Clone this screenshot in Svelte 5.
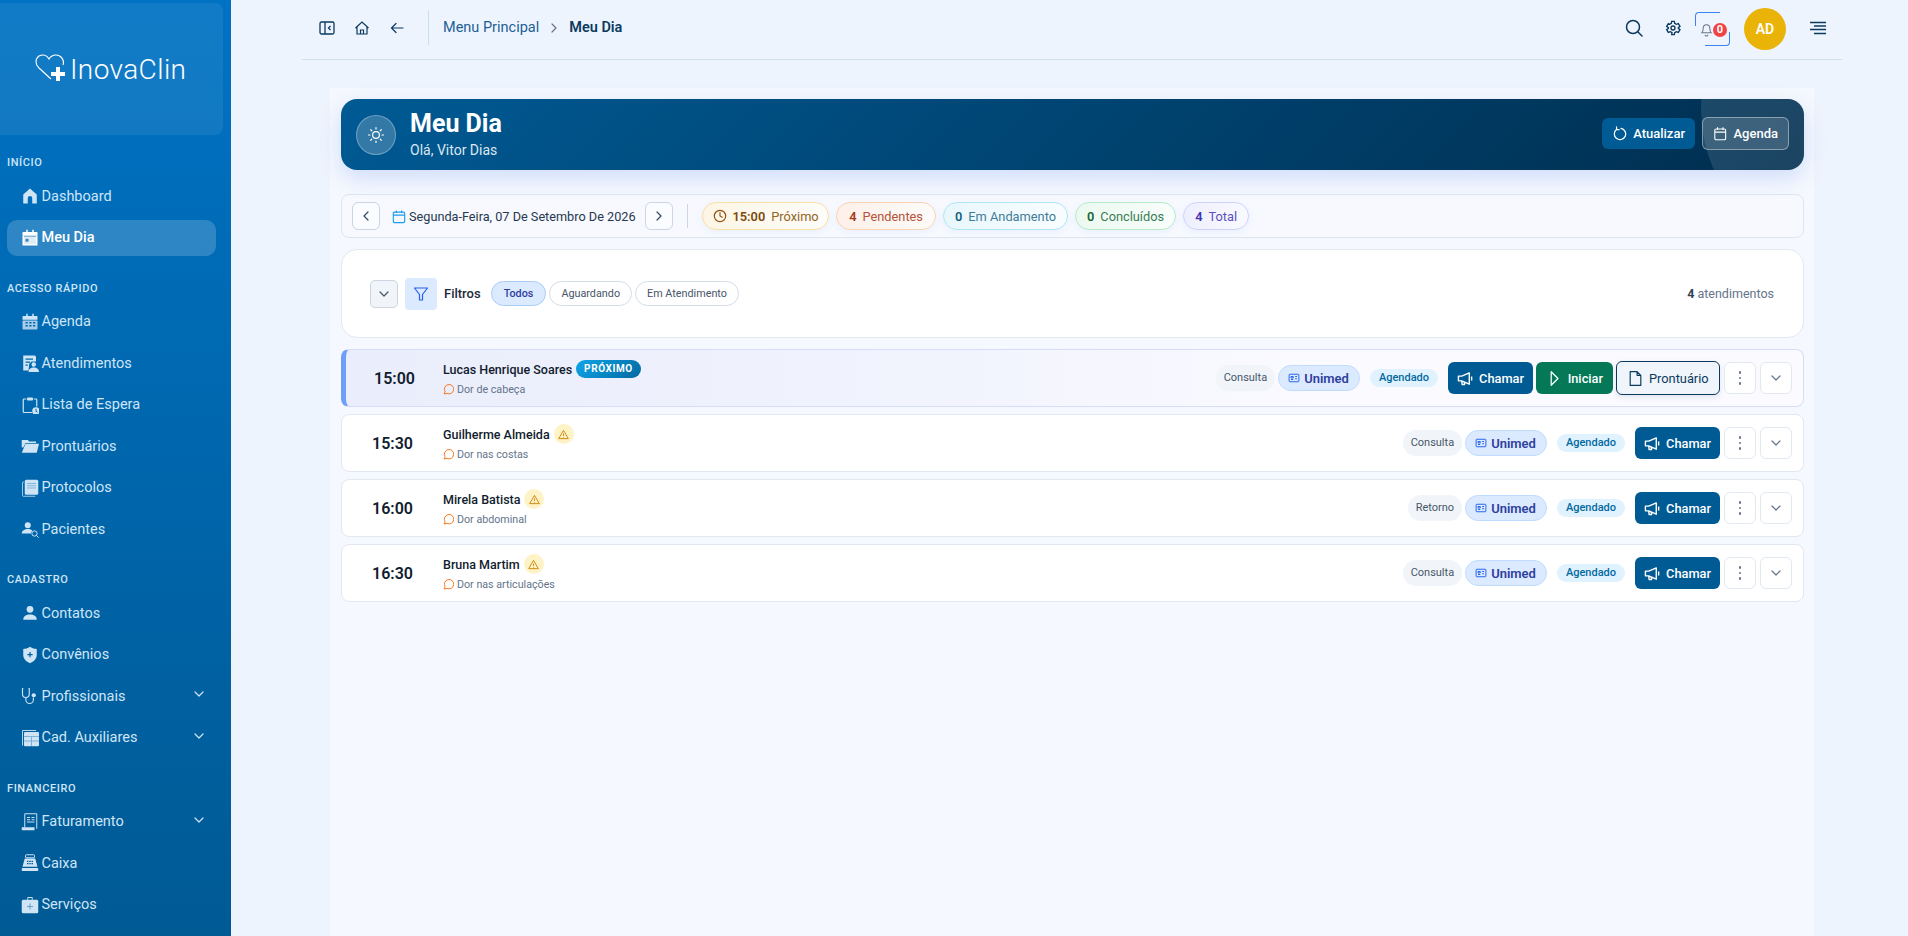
<script>
  // stroke/fill bodies of the icons, 24x24 unless noted
  const ic = {
    house: '<path fill="currentColor" d="M12 2 3 10v12h6v-7a3 3 0 0 1 6 0v7h6V10z"/>',
    calToday: '<path fill="currentColor" d="M7 1h2v3H7zM15 1h2v3h-2zM3 4h18a1 1 0 0 1 1 1v4H2V5a1 1 0 0 1 1-1z"/><path fill="none" stroke="currentColor" stroke-width="2" d="M3 9v12h18V9"/><rect fill="currentColor" opacity=".85" x="4" y="10" width="16" height="10"/><rect fill="#3d86c4" x="6" y="13" width="4" height="4"/>',
    calGrid: '<path fill="currentColor" d="M7 1h2v3H7zM15 1h2v3h-2zM3 4h18a1 1 0 0 1 1 1v4H2V5a1 1 0 0 1 1-1z"/><rect fill="currentColor" opacity=".8" x="2" y="10" width="20" height="12" rx="1"/><path fill="#0069b0" d="M6 12h3v2H6zM11 12h3v2h-3zM16 12h3v2h-3zM6 16h3v2H6zM11 16h3v2h-3zM16 16h3v2h-3z"/>',
    docUser: '<path fill="currentColor" d="M3 2h15a2 2 0 0 1 2 2v6h-6l-3 3-1 9H3z"/><path fill="#0069b0" d="M6 6h10v1.5H6zM6 10h6v1.500H6zM6 14h3v1.500H6z"/><circle fill="currentColor" cx="17" cy="14" r="3"/><path fill="currentColor" d="M10 24c0-4 3-6 7-6s7 2 7 6z"/>',
    clip: '<path fill="none" stroke="currentColor" stroke-width="1.600" d="M7 4H4a1 1 0 0 0-1 1v16a1 1 0 0 0 1 1h11M17 4h3a1 1 0 0 1 1 1v9"/><rect fill="currentColor" x="8" y="2" width="8" height="4" rx="1"/><circle fill="currentColor" cx="20" cy="20" r="5"/><path stroke="#0069b0" stroke-width="1.300" fill="none" d="M20 17v3.500l2 1"/>',
    folder: '<path fill="currentColor" d="M1 4h8l2 2h9v2H6L3 14H1z"/><path fill="currentColor" d="M6 9h18l-3 12H1z"/>',
    book: '<path fill="none" stroke="currentColor" stroke-width="1.300" opacity=".8" d="M4 4H3a1 1 0 0 0-1 1v17a1 1 0 0 0 1 1h16"/><rect fill="currentColor" x="5" y="1" width="18" height="20" rx="2"/><path stroke="#0069b0" stroke-width="1" opacity=".5" d="M8 6h12M8 9h12M8 12h12"/>',
    userSearch: '<circle fill="currentColor" cx="9" cy="7" r="4"/><path fill="currentColor" d="M1 18c0-4 4-6 8-6 2 0 4 .5 6 2l-2 4z"/><circle fill="none" stroke="currentColor" stroke-width="1.300" cx="18" cy="18" r="3.500"/><path stroke="currentColor" stroke-width="1.300" d="m20.500 20.500 3 3"/>',
    user: '<circle fill="currentColor" cx="12" cy="7" r="4.500"/><path fill="currentColor" d="M3 21c0-5 4-7 9-7s9 2 9 7z"/>',
    shield: '<path fill="currentColor" d="M12 1c3 2 6 3 9 3v8c0 5-4 9-9 11-5-2-9-6-9-11V4c3 0 6-1 9-3z"/><path stroke="#0060a0" stroke-width="1.600" d="M12 8v7M8.500 11.500h7"/>',
    steth: '<path fill="none" stroke="currentColor" stroke-width="1.500" d="M3 2H2v7c0 3 2 5 4.500 5S11 12 11 9V2h-1M6.500 14v3a5 5 0 0 0 10 0v-3"/><circle fill="currentColor" cx="17" cy="11" r="2.800"/>',
    table: '<path fill="none" stroke="currentColor" stroke-width="1.200" d="M2 22V2h18"/><rect fill="currentColor" x="4" y="4" width="20" height="19" rx="1.500"/><path stroke="#0060a0" opacity=".5" stroke-width="1" d="M4 10h20M14 10v13M4 16h20"/>',
    ledger: '<path fill="none" stroke="currentColor" stroke-width="1.300" d="M5 19V1h16v20"/><path stroke="currentColor" stroke-width="1.300" d="M8 6h4M14 6h4M8 9h4M14 9h4M8 12h10"/><path fill="currentColor" d="M1 19h17v4H2a1 1 0 0 1-1-1z"/>',
    register: '<rect fill="none" stroke="currentColor" stroke-width="1.300" x="6" y="1" width="12" height="4" rx="1"/><path fill="currentColor" d="M5 6h14l3 11H2z"/><path fill="#005c99" d="M8 9h2v1.500H8zM11 9h2v1.500h-2zM14 9h2v1.500h-2zM8 12h2v1.500H8zM11 12h2v1.500h-2zM14 12h2v1.500h-2z"/><rect fill="currentColor" x="1" y="18.500" width="22" height="4" rx="1"/>',
    kit: '<path fill="none" stroke="currentColor" stroke-width="1.300" d="M9 5V2h6v3"/><rect fill="currentColor" x="1" y="5" width="22" height="18" rx="2"/><path stroke="#005c99" stroke-width="1.100" opacity=".6" d="M12 10v8M8 14h8"/>'
  };

  const sections = [
    { title: 'INÍCIO', items: [
      { label: 'Dashboard', icon: 'house' },
      { label: 'Meu Dia', icon: 'calToday', active: true }
    ]},
    { title: 'ACESSO RÁPIDO', items: [
      { label: 'Agenda', icon: 'calGrid' },
      { label: 'Atendimentos', icon: 'docUser' },
      { label: 'Lista de Espera', icon: 'clip' },
      { label: 'Prontuários', icon: 'folder' },
      { label: 'Protocolos', icon: 'book' },
      { label: 'Pacientes', icon: 'userSearch' }
    ]},
    { title: 'CADASTRO', items: [
      { label: 'Contatos', icon: 'user' },
      { label: 'Convênios', icon: 'shield' },
      { label: 'Profissionais', icon: 'steth', more: true },
      { label: 'Cad. Auxiliares', icon: 'table', more: true }
    ]},
    { title: 'FINANCEIRO', items: [
      { label: 'Faturamento', icon: 'ledger', more: true },
      { label: 'Caixa', icon: 'register' },
      { label: 'Serviços', icon: 'kit' }
    ]}
  ];

  const stats = [
    { n: '4', label: 'Pendentes', cls: 'orange' },
    { n: '0', label: 'Em Andamento', cls: 'cyan' },
    { n: '0', label: 'Concluídos', cls: 'green' },
    { n: '4', label: 'Total', cls: 'violet' }
  ];

  const rows = [
    { time: '15:00', name: 'Lucas Henrique Soares', note: 'Dor de cabeça', kind: 'Consulta', next: true },
    { time: '15:30', name: 'Guilherme Almeida', note: 'Dor nas costas', kind: 'Consulta' },
    { time: '16:00', name: 'Mirela Batista', note: 'Dor abdominal', kind: 'Retorno' },
    { time: '16:30', name: 'Bruna Martim', note: 'Dor nas articulações', kind: 'Consulta' }
  ];
</script>

{#snippet chev(d)}
  <svg viewBox="0 0 24 24" width="16" height="16" fill="none" stroke="currentColor" stroke-width="1.800" stroke-linecap="round" stroke-linejoin="round"><path d={d}/></svg>
{/snippet}

<div class="app">
  <aside class="side">
    <div class="brand">
      <svg class="brand-mark" viewBox="0 0 32 30" width="32" height="30">
        <path fill="none" stroke="#fff" stroke-width="1.100" d="M16 26 4 15C0 11 0 6 4 3c4-2 8-1 10 3 3-5 9-5 12-2 2 2 3 5 2 8"/>
        <path fill="#fff" d="M21 14h4v5h5v4h-5v5h-4v-5h-5v-4h5z"/>
      </svg>
      <span>InovaClin</span>
    </div>
    {#each sections as s}
      <div class="sec-title">{s.title}</div>
      <nav class="sec">
        {#each s.items as it}
          <div class="nav-item" class:active={it.active}>
            <svg class="nav-icon" viewBox="0 0 24 24" width="18" height="18">{@html ic[it.icon]}</svg>
            <span class="nav-label">{it.label}</span>
            {#if it.more}
              <span class="nav-more">{@render chev('m6 9 6 6 6-6')}</span>
            {/if}
          </div>
        {/each}
      </nav>
    {/each}
  </aside>

  <main class="main">
    <header class="top">
      <div class="top-left">
        <svg viewBox="0 0 16 16" width="16" height="16" fill="none" stroke="#0b3a5e" stroke-width="1.300"><rect x="1" y="2" width="14" height="12" rx="1.500"/><path d="M6 2v12M11.500 6 9.500 8l2 2"/></svg>
        <svg viewBox="0 0 16 16" width="16" height="16" fill="none" stroke="#0b3a5e" stroke-width="1.200"><path d="M1.500 8 8 2l6.500 6M3 7v7h10V7M6.500 14v-4h3v4"/></svg>
        <svg viewBox="0 0 16 16" width="16" height="16" fill="none" stroke="#0b3a5e" stroke-width="1.200" stroke-linecap="round"><path d="M14 8H3M7 3.500 2.500 8 7 12.500"/></svg>
      </div>
      <div class="crumbs">
        <span class="crumb-link">Menu Principal</span>
        <span class="crumb-sep">{@render chev('m9 6 6 6-6 6')}</span>
        <span class="crumb-now">Meu Dia</span>
      </div>
      <div class="top-right">
        <svg class="up" viewBox="0 0 18 18" width="18" height="18" fill="none" stroke="#0b3a5e" stroke-width="1.500" stroke-linecap="round"><circle cx="8" cy="8" r="6.500"/><path d="m13 13 4 4"/></svg>
        <svg class="gear up" viewBox="0 0 24 24" width="16" height="16" fill="none" stroke="#0b3a5e" stroke-width="2"><circle cx="12" cy="12" r="3"/><path d="m10 2-.5 3-2.500 1.500L5 5.500l-2.500 4L5 11.500v1L2.500 14.500l2.500 4 3-1L10.500 19l-.5 3h4l.5-3 2.500-1.500 3 1 2.500-4-2.500-2v-1l2.500-2-2.500-4-3 1L14.500 5 14 2z"/></svg>
        <div class="bell">
          <span class="ring-a"></span><span class="ring-b"></span>
          <svg viewBox="0 0 16 16" width="15" height="16" fill="none" stroke="#66758a" stroke-width="1.100"><path d="M3 12c1-1 1.500-2 1.500-5a3.500 3.500 0 0 1 7 0c0 3 .5 4 1.500 5zM6.500 14a1.500 1.500 0 0 0 3 0"/></svg>
          <span class="bell-count">0</span>
        </div>
        <div class="avatar">AD</div>
        <svg class="up" viewBox="0 0 18 14" width="18" height="14" stroke="#0b3a5e" stroke-width="1.400"><path d="M1 1.500h16M5 5h12M1 8.500h16M5 12.500h12"/></svg>
      </div>
    </header>

    <div class="panel">
      <section class="hero">
        <div class="hero-sun">
          <svg viewBox="0 0 24 24" width="18" height="18" fill="none" stroke="#fff" stroke-width="1.600" stroke-linecap="round"><circle cx="12" cy="12" r="4.500"/><path d="M12 2v2M12 20v2M2 12h2M20 12h2M5 5l1.400 1.400M17.600 17.600 19 19M5 19l1.400-1.400M17.600 6.400 19 5"/></svg>
        </div>
        <div class="hero-text">
          <h1>Meu Dia</h1>
          <p>Olá, Vitor Dias</p>
        </div>
        <div class="hero-btns">
          <button class="btn-refresh">
            <svg viewBox="0 0 16 16" width="17" height="17" fill="none" stroke="#fff" stroke-width="1.300" stroke-linecap="round" stroke-linejoin="round"><path d="M5 3.600A6 6 0 1 0 9.500 2.600M4.800 1v2.800h2.800"/></svg>
            Atualizar
          </button>
          <button class="btn-agenda">
            <svg viewBox="0 0 16 16" width="17" height="17" fill="none" stroke="#fff" stroke-width="1.200"><rect x="2" y="3" width="12" height="12" rx="1.500"/><path d="M2 6.500h12M5 1v3M11 1v3"/></svg>
            Agenda
          </button>
        </div>
      </section>

      <section class="datebar">
        <button class="square">{@render chev('m15 6-6 6 6 6')}</button>
        <svg class="date-cal" viewBox="0 0 16 16" width="14" height="15" fill="none" stroke="#1d9bf0" stroke-width="1.300"><rect x="1.500" y="3" width="13" height="12" rx="1.500"/><path d="M1.500 6.500h13M5 1v3M11 1v3"/></svg>
        <span class="date-text">Segunda-Feira, 07 De Setembro De 2026</span>
        <button class="square">{@render chev('m9 6 6 6-6 6')}</button>
        <span class="vr"></span>
        <div class="stats">
          <div class="stat amber">
            <svg viewBox="0 0 16 16" width="14" height="14" fill="none" stroke="#92500f" stroke-width="1.300" stroke-linecap="round"><circle cx="8" cy="8" r="6.500"/><path d="M8 4v4l2.500 1.500"/></svg>
            <b>15:00</b> <span>Próximo</span>
          </div>
          {#each stats as st}
            <div class="stat {st.cls}"><b>{st.n}</b> <span>{st.label}</span></div>
          {/each}
        </div>
      </section>

      <section class="filters">
        <button class="collapse">{@render chev('m6 9 6 6 6-6')}</button>
        <span class="funnel">
          <svg viewBox="0 0 16 16" width="16" height="16" fill="none" stroke="#2563eb" stroke-width="1.200" stroke-linejoin="round"><path d="M1.500 2h13L9.500 8.500V14h-3V8.500z"/></svg>
        </span>
        <strong class="f-label">Filtros</strong>
        <div class="chips">
          <span class="chip on">Todos</span>
          <span class="chip">Aguardando</span>
          <span class="chip">Em Atendimento</span>
        </div>
        <span class="f-count"><b>4</b> atendimentos</span>
      </section>

      <section class="list">
        {#each rows as r}
          <article class="row" class:next={r.next}>
            <div class="time">{r.time}</div>
            <div class="who">
              <div class="name">
                <span>{r.name}</span>
                {#if r.next}
                  <span class="tag-next">PRÓXIMO</span>
                {:else}
                  <span class="warn">
                    <svg viewBox="0 0 16 16" width="11" height="11" fill="none" stroke="#d1880b" stroke-width="1.400" stroke-linejoin="round"><path d="M8 2 15 14H1zM8 6.500v3.500M8 11.500v1"/></svg>
                  </span>
                {/if}
              </div>
              <div class="note">
                <svg viewBox="0 0 16 16" width="11" height="11" fill="none" stroke="#f97316" stroke-width="1.400" stroke-linejoin="round"><path d="M1.500 14.500 3 11a6.800 6.800 0 1 1 3 2.700z"/></svg>
                {r.note}
              </div>
            </div>
            <div class="acts">
              <span class="kind">{r.kind}</span>
              <span class="plan">
                <svg viewBox="0 0 16 16" width="12" height="12" fill="none" stroke="#2563eb" stroke-width="1.300"><rect x="1.500" y="3" width="13" height="10" rx="1"/><path d="M4 10h3M9.500 6h2.500M9.500 9h2.500M4 6h3v2H4z"/></svg>
                Unimed
              </span>
              <span class="status">Agendado</span>
              <button class="act call">
                <svg viewBox="0 0 18 18" width="17" height="17" fill="none" stroke="#fff" stroke-width="1.500" stroke-linejoin="round"><path d="M1.500 6.500v5h3.500l8 3.500V3L5 6.500zM15.500 7v4M5 11.500l.5 4h2.500l-.5-3"/></svg>
                Chamar
              </button>
              {#if r.next}
                <button class="act start">
                  <svg viewBox="0 0 16 16" width="17" height="17" fill="none" stroke="#fff" stroke-width="1.200" stroke-linejoin="round"><path d="M5 1.500v13L11.500 8z"/></svg>
                  Iniciar
                </button>
                <button class="act chart">
                  <svg viewBox="0 0 16 16" width="17" height="17" fill="none" stroke="#0b3a5e" stroke-width="1.100" stroke-linejoin="round"><path d="M3 1.500h6.500L13 5v9.500H3zM9.500 1.500V5H13"/></svg>
                  Prontuário
                </button>
              {/if}
              <button class="mini dots"><i></i><i></i><i></i></button>
              <button class="mini">{@render chev('m6 9 6 6 6-6')}</button>
            </div>
          </article>
        {/each}
      </section>
    </div>
  </main>
</div>

<style>
  :global(body) {
    margin: 0;
    overflow: hidden;
    background: #eef4fd;
    font-family: Roboto, "Noto Sans", sans-serif;
  }
  button {
    font-family: inherit;
    cursor: pointer;
  }
  .app {
    display: grid;
    grid-template-columns: 231px 1fr;
    height: 936px;
    overflow: hidden;
  }

  /* sidebar */
  .side {
    height: 936px;
    overflow: hidden;
    background: linear-gradient(180deg, #0072c4 0%, #005a94 100%);
    color: #cfe5f6;
  }
  .brand {
    height: 132px;
    margin: 3px 8px 0 0;
    border-radius: 0 8px 8px 0;
    background: rgba(255, 255, 255, 0.07);
    display: flex;
    align-items: center;
    padding: 0 0 0 35px;
    gap: 3px;
    color: #fff;
    font-size: 28px;
    font-weight: 300;
    letter-spacing: 0.4px;
  }
  .brand-mark {
    margin-top: -2px;
  }
  .sec-title {
    margin: 0 0 0 7px;
    height: 18px;
    line-height: 18px;
    font-size: 11px;
    font-weight: 500;
    letter-spacing: 0.6px;
  }
  .brand + .sec-title {
    margin-top: 19px;
  }
  .sec {
    display: flex;
    flex-direction: column;
    gap: 5.500px;
    margin: 6px 0 24px;
  }
  .nav-item {
    height: 36px;
    margin: 0 15px 0 7px;
    padding: 0 9px 0 14px;
    border-radius: 10px;
    display: flex;
    align-items: center;
    gap: 2.500px;
    font-size: 14.500px;
  }
  .nav-item.active {
    background: rgba(255, 255, 255, 0.18);
    color: #fff;
    font-weight: 500;
  }
  .nav-icon {
    flex: none;
  }
  .nav-label {
    flex: 1;
  }
  .nav-more {
    display: flex;
    height: 16px;
    margin-top: -4px;
  }

  /* top bar */
  .main {
    min-width: 0;
  }
  .top {
    height: 59px;
    margin: 0 66px 0 71px;
    border-bottom: 1px solid #cfe0ef;
    display: flex;
    align-items: center;
    box-sizing: content-box;
  }
  .top-left {
    display: flex;
    align-items: center;
    gap: 19px;
    padding: 0 23px 0 17px;
    height: 35px;
    border-right: 1px solid #c9dff0;
    margin-top: -4px;
  }
  .crumbs {
    display: flex;
    align-items: center;
    margin: -4px 0 0 14px;
    font-size: 14.500px;
    gap: 7px;
  }
  .crumb-link {
    color: #1d5f95;
  }
  .crumb-sep {
    display: flex;
    color: #667788;
  }
  .crumb-now {
    font-weight: 600;
    color: #0b3a5e;
  }
  .top-right {
    margin-left: auto;
    margin-right: 15px;
    display: flex;
    align-items: center;
    margin-top: -2px;
  }
  .up {
    margin-top: -2px;
  }
  .gear {
    margin-left: 22px;
  }
  .bell {
    position: relative;
    width: 35px;
    height: 34px;
    margin-left: 14px;
    display: flex;
    align-items: center;
    padding-left: 4px;
    box-sizing: border-box;
  }
  .ring-a,
  .ring-b {
    position: absolute;
    width: 24px;
    height: 13px;
    border: 0 solid #3b82f6;
  }
  .ring-a {
    left: 0;
    top: 0;
    border-width: 1px 0 0 1px;
    border-top-left-radius: 4px;
  }
  .ring-b {
    right: 0;
    bottom: 0;
    border-width: 0 1px 1px 0;
    border-bottom-right-radius: 4px;
  }
  .bell-count {
    position: absolute;
    left: 18px;
    top: 11px;
    width: 14px;
    height: 14px;
    border-radius: 50%;
    background: #ef4444;
    color: #fff;
    font-size: 11px;
    font-weight: 700;
    line-height: 14px;
    text-align: center;
  }
  .avatar {
    width: 42px;
    height: 42px;
    margin: 0 23px 0 14px;
    border-radius: 50%;
    background: #eab308;
    color: #fff;
    font-size: 14px;
    font-weight: 600;
    line-height: 42px;
    text-align: center;
  }

  /* content */
  .panel {
    margin: 28px 94px 0 99px;
    padding: 11px 10px 0 11px;
    height: 848px;
    box-sizing: border-box;
    background: #f5f8fe;
    display: flex;
    flex-direction: column;
  }
  .hero {
    position: relative;
    overflow: hidden;
    flex: none;
    height: 71px;
    border-radius: 16px;
    padding: 0 15px;
    display: flex;
    align-items: center;
    gap: 14px;
    color: #fff;
    background: linear-gradient(135deg, #005a94 0%, #002e4f 100%);
    box-shadow: 0 8px 22px rgba(37, 99, 235, 0.18);
  }
  .hero::after {
    content: "";
    position: absolute;
    left: 1360px;
    top: -140px;
    width: 300px;
    height: 300px;
    border-radius: 50%;
    background: rgba(255, 255, 255, 0.11);
    pointer-events: none;
  }
  .hero-sun {
    flex: none;
    width: 38px;
    height: 38px;
    border-radius: 50%;
    background: rgba(255, 255, 255, 0.2);
    border: 1px solid rgba(255, 255, 255, 0.3);
    display: flex;
    align-items: center;
    justify-content: center;
  }
  .hero-text {
    margin-top: -2px;
  }
  .hero-text h1 {
    margin: 0;
    font-size: 25px;
    line-height: 30px;
    font-weight: 700;
  }
  .hero-text p {
    margin: 3px 0 0;
    font-size: 14px;
    line-height: 17px;
    color: #dbe7f1;
  }
  .hero-btns {
    margin: -3px 0 0 auto;
    display: flex;
    align-items: center;
    gap: 7px;
    position: relative;
    z-index: 1;
  }
  .hero-btns button {
    display: flex;
    align-items: center;
    gap: 6px;
    color: #fff;
    font-size: 13px;
    font-weight: 500;
    border-radius: 6px;
    padding: 0 10px;
  }
  .btn-refresh {
    height: 31px;
    width: 93px;
    background: #005a94;
    border: 0;
  }
  .btn-agenda {
    height: 33px;
    width: 87px;
    background: rgba(255, 255, 255, 0.15);
    border: 1px solid rgba(255, 255, 255, 0.4);
  }

  .datebar {
    flex: none;
    height: 44px;
    box-sizing: border-box;
    margin-top: 24px;
    padding: 0 10px;
    border: 1px solid #dfe5f0;
    border-radius: 8px;
    background: #f7f9ff;
    display: flex;
    align-items: center;
  }
  .square {
    width: 28px;
    height: 28px;
    padding: 0;
    display: flex;
    align-items: center;
    justify-content: center;
    border-radius: 6px;
    border: 1px solid #cdd5e2;
    background: #fbfcff;
    color: #33485e;
  }
  .date-cal {
    margin-left: 12px;
  }
  .date-text {
    margin: 0 11px 0 3px;
    width: 225px;
    font-size: 12.700px;
    color: #26384d;
    white-space: nowrap;
  }
  .vr {
    width: 1px;
    height: 24px;
    margin: 0 14px;
    background: #cdd5e2;
  }
  .stats {
    display: flex;
    gap: 7px;
  }
  .stat {
    height: 28px;
    box-sizing: border-box;
    padding: 0 11px;
    display: flex;
    align-items: center;
    gap: 6px;
    border-radius: 14px;
    border: 1px solid;
    font-size: 12.800px;
    white-space: nowrap;
    box-shadow: 0 2px 6px rgba(59, 130, 246, 0.08);
  }
  .stat b {
    font-weight: 600;
  }
  .amber {
    padding: 0 9.500px;
    border-color: #f8e0a0;
    background: linear-gradient(90deg, #fdf6e6, #fdfcf8);
    color: #92641f;
  }
  .amber b {
    color: #7c4a0c;
  }
  .orange {
    padding: 0 12px;
    border-color: #fbd3b4;
    background: linear-gradient(90deg, #fdf0e8, #fcfbf9);
    color: #b5533a;
  }
  .orange b {
    color: #a63a1c;
  }
  .cyan {
    border-color: #b0e6f5;
    background: linear-gradient(90deg, #e8f7fc, #f9fdff);
    color: #3f7d98;
  }
  .cyan b {
    color: #155e80;
  }
  .green {
    border-color: #b4ebc8;
    background: linear-gradient(90deg, #ebf9f0, #f9fdfb);
    color: #3a7c55;
  }
  .green b {
    color: #166534;
  }
  .violet {
    border-color: #cfd2fb;
    background: linear-gradient(90deg, #eeeffe, #f9f9ff);
    color: #5b50c0;
  }
  .violet b {
    color: #3f33ae;
  }

  .filters {
    flex: none;
    height: 89px;
    box-sizing: border-box;
    margin-top: 11px;
    padding: 0 29px 0 28px;
    background: #fff;
    border: 1px solid #e3e8f1;
    border-radius: 16px;
    display: flex;
    align-items: center;
  }
  .collapse {
    width: 28px;
    height: 28px;
    padding: 0;
    display: flex;
    align-items: center;
    justify-content: center;
    border-radius: 5px;
    border: 1px solid #cbd5e1;
    background: #f1f5f9;
    color: #475569;
  }
  .funnel {
    width: 32px;
    height: 32px;
    margin-left: 7px;
    border-radius: 4px;
    background: #dbeafe;
    display: flex;
    align-items: center;
    justify-content: center;
  }
  .f-label {
    margin: 0 10px 0 7px;
    font-size: 13px;
    font-weight: 500;
    color: #1e293b;
  }
  .chips {
    display: flex;
    gap: 3px;
  }
  .chip {
    height: 25px;
    box-sizing: border-box;
    padding: 0 11px;
    border: 1px solid #d5dce8;
    border-radius: 13px;
    font-size: 10.800px;
    line-height: 23px;
    color: #475569;
    background: #fff;
  }
  .chip.on {
    padding: 0 12px;
    border-color: #a8ccf7;
    background: #dbeafe;
    color: #2f3f9e;
    font-weight: 500;
  }
  .f-count {
    margin-left: auto;
    font-size: 12.500px;
    color: #64748b;
  }
  .f-count b {
    color: #334155;
  }

  .list {
    display: flex;
    flex-direction: column;
    gap: 7px;
    margin-top: 11px;
  }
  .row {
    height: 58px;
    box-sizing: border-box;
    border: 1px solid #e2e8f2;
    border-radius: 8px;
    background: #fff;
    display: flex;
    align-items: center;
    padding-right: 11px;
  }
  .row.next {
    border-color: #d8dcfb;
    border-left: 5px solid #6f9ef8;
    background: linear-gradient(90deg, #eaedfb 0%, #f0f2fd 35%, #fbfbff 70%);
  }
  .time {
    width: 101px;
    flex: none;
    text-align: center;
    font-size: 16px;
    font-weight: 600;
    color: #111c2e;
  }
  .row.next .time {
    width: 97px;
  }
  .who {
    margin-top: -1px;
  }
  .name {
    display: flex;
    align-items: center;
    gap: 4px;
    height: 20px;
    font-size: 12.500px;
    font-weight: 500;
    color: #111c2e;
    white-space: nowrap;
  }
  .note {
    display: flex;
    align-items: center;
    gap: 3px;
    margin-top: 4px;
    font-size: 10.700px;
    color: #64748b;
  }
  .tag-next {
    height: 18px;
    padding: 0 8px;
    border-radius: 9px;
    background: linear-gradient(135deg, #0ea5e9, #0369a1);
    color: #fff;
    font-size: 10px;
    line-height: 18px;
    font-weight: 700;
    letter-spacing: 0.6px;
  }
  .warn {
    width: 20px;
    height: 20px;
    border-radius: 50%;
    background: #fef3c7;
    display: flex;
    align-items: center;
    justify-content: center;
  }
  .acts {
    margin-left: auto;
    display: flex;
    align-items: center;
    gap: 3px;
  }
  .kind {
    height: 26px;
    padding: 0 8px;
    border-radius: 13px;
    background: #f1f5f9;
    font-size: 11px;
    line-height: 26px;
    color: #475569;
  }
  .plan {
    height: 26px;
    box-sizing: border-box;
    padding: 0 10px 0 9px;
    display: flex;
    align-items: center;
    gap: 4px;
    border-radius: 13px;
    border: 1px solid #bfdbfe;
    background: #dbeafe;
    color: #2f3f9e;
    font-size: 13px;
    font-weight: 600;
  }
  .status {
    height: 18px;
    margin: 0 7px;
    padding: 0 9px;
    border-radius: 9px;
    background: #e0f2fe;
    color: #0369a1;
    font-size: 11px;
    line-height: 18px;
    font-weight: 500;
  }
  .act {
    height: 32px;
    box-sizing: border-box;
    padding: 0 9px;
    display: flex;
    align-items: center;
    gap: 5px;
    border-radius: 6px;
    border: 0;
    color: #fff;
    font-size: 12.800px;
    font-weight: 500;
  }
  .call {
    background: #005a94;
  }
  .start {
    width: 77px;
    padding: 0 10px;
    background: #047857;
  }
  .chart {
    width: 104px;
    height: 34px;
    padding: 0 10px;
    background: #eff5fb;
    border: 1px solid #0b3a5e;
    color: #0b3a5e;
    font-weight: 400;
    box-shadow: 0 2px 6px rgba(15, 60, 100, 0.12);
  }
  .mini {
    width: 32px;
    height: 32px;
    padding: 0;
    margin-left: 1px;
    display: flex;
    align-items: center;
    justify-content: center;
    border-radius: 6px;
    border: 1px solid #e2e8f0;
    background: #fff;
    color: #64748b;
  }
  .dots {
    flex-direction: column;
    gap: 3px;
  }
  .dots i {
    width: 2.500px;
    height: 2.500px;
    border-radius: 50%;
    background: #64748b;
  }
</style>
